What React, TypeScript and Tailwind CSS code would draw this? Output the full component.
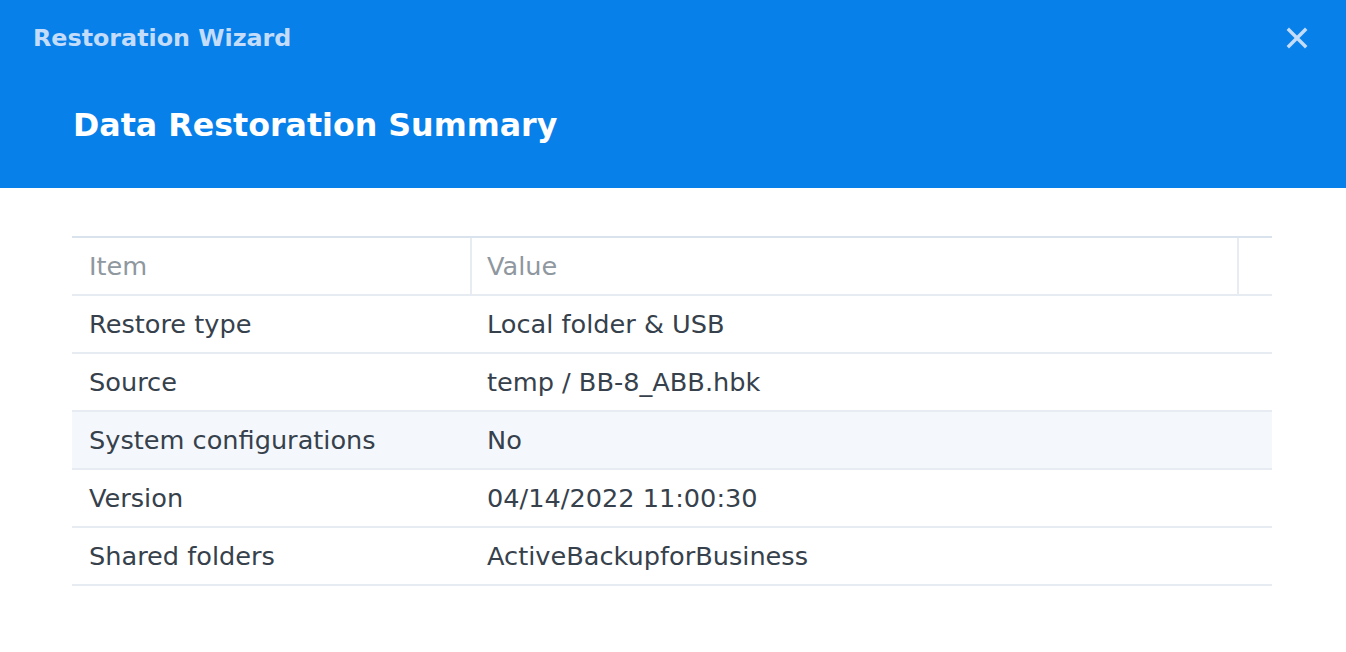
import React from "react";

const rows = [
  { item: "Restore type", value: "Local folder & USB" },
  { item: "Source", value: "temp / BB-8_ABB.hbk" },
  { item: "System configurations", value: "No", hover: true },
  { item: "Version", value: "04/14/2022 11:00:30" },
  { item: "Shared folders", value: "ActiveBackupforBusiness" },
];

export default function App() {
  return (
    <div
      className="w-[1346px] h-[652px] bg-white overflow-hidden"
      style={{ fontFamily: '"DejaVu Sans", Verdana, sans-serif' }}
    >
      <div className="h-[188px] bg-[#0880ea] relative">
        <div className="pl-[33px] pt-[22px] text-[23.8px] font-bold text-[#c3dcfa] leading-[32px]">
          Restoration Wizard
        </div>
        <div className="pl-[73px] pt-[51px] text-[31.7px] font-bold text-white leading-[40px]">
          Data Restoration Summary
        </div>
        <button className="absolute right-[38px] top-[27px] text-[#c3dcfa]">
          <svg width="22" height="22" viewBox="0 0 22 22">
            <path d="M3 3 L19 19 M19 3 L3 19" stroke="currentColor" strokeWidth="3.4" strokeLinecap="square" />
          </svg>
        </button>
      </div>

      <div className="pt-[48px] pl-[72px] pr-[74px]">
        <div className="border-t-2 border-[#d9e3ee] text-[25.6px]">
          <div className="flex h-[58px] border-b-2 border-[#e6ecf2] text-[#8f979f]">
            <div className="w-[400px] border-r-2 border-[#e6ecf2] flex items-center pl-[17px]">Item</div>
            <div className="flex-1 border-r-2 border-[#e6ecf2] flex items-center pl-[15px]">Value</div>
            <div className="w-[33px]" />
          </div>
          {rows.map((r) => (
            <div
              key={r.item}
              className={`flex h-[58px] border-b-2 border-[#e6ecf2] text-[#36414c] ${r.hover ? "bg-[#f4f8fd]" : ""}`}
            >
              <div className="w-[400px] flex items-center pl-[17px]">{r.item}</div>
              <div className="flex-1 flex items-center pl-[15px]">{r.value}</div>
            </div>
          ))}
        </div>
      </div>
    </div>
  );
}
